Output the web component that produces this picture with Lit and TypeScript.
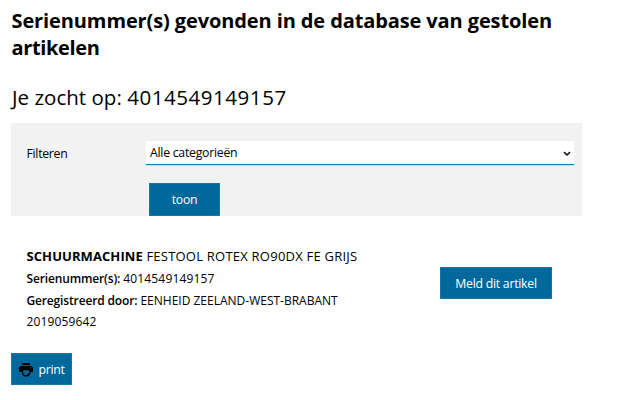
import { LitElement, html, css } from "lit";
import { customElement } from "lit/decorators.js";

@customElement("app-root")
export class AppRoot extends LitElement {
  static styles = css`
    :host {
      display: block;
      box-sizing: border-box;
      height: 400px;
      padding: 7px 49px 0 11px;
      background: #fff;
      color: #000;
      font-family: "Open Sans", "Noto Sans", sans-serif;
      font-size: 12px;
      overflow: hidden;
    }
    h1, h2, p { margin: 0; }
    h1 {
      padding-left: 0.5px;
      font-size: 20px;
      line-height: 27px;
      font-weight: 660;
      letter-spacing: -0.11px;
    }
    h1 .tail { letter-spacing: -0.35px; }
    h2 {
      margin-top: 22px;
      padding-left: 1px;
      font-size: 20.5px;
      line-height: 28px;
      font-weight: 400;
      letter-spacing: 0.02px;
    }
    h2 span { letter-spacing: 0.55px; }
    .filter {
      display: grid;
      grid-template-columns: 120px 428px;
      grid-template-rows: 24px 33px;
      row-gap: 18px;
      box-sizing: border-box;
      height: 93px;
      margin-top: 12px;
      padding: 18px 8px 0 15px;
      background: #f2f2f2;
    }
    label {
      padding-left: 0.5px;
      font-size: 12.3px;
      line-height: 25px;
      letter-spacing: -0.3px;
    }
    .select {
      display: flex;
      align-items: center;
      justify-content: space-between;
      box-sizing: border-box;
      height: 24px;
      padding: 0 3px 0 4px;
      border: 0;
      border-bottom: 1px solid #1f7dac;
      background: #fff;
      font-size: 12.3px;
      letter-spacing: -0.27px;
      box-shadow: 0 1px #c5dce8;
    }
    .chevron { width: 8px; height: 6px; margin-top: 2px; }
    button {
      display: flex;
      align-items: center;
      justify-content: center;
      box-sizing: border-box;
      height: 32px;
      padding: 0;
      border: 1px solid #1a75a5;
      background: #00689a;
      color: #fff;
      font: 400 12.3px "Open Sans", "Noto Sans", sans-serif;
      letter-spacing: -0.27px;
    }
    .show { grid-column: 2; width: 71px; height: 33px; margin-left: 3px; }
    .result {
      display: flex;
      justify-content: space-between;
      margin-top: 29px;
      padding: 0 30px 0 15.5px;
    }
    .result p { line-height: 21.7px; white-space: nowrap; }
    .result b { font-weight: 650; letter-spacing: -0.15px; }
    .result .title { font-size: 13px; line-height: 23px; letter-spacing: 0.23px; }
    .result .title b { font-weight: 700; letter-spacing: 0.08px; }
    .number { letter-spacing: 0.15px; }
    .report { width: 112px; margin-top: 22px; }
    .print { width: 61px; margin-top: 20px; gap: 5px; padding-left: 1px; }
    .printer { width: 14px; height: 14px; margin-top: 1px; }
  `;

  render() {
    return html`
      <h1>Serienummer(s) gevonden in de database van gestolen<br /><span class="tail">artikelen</span></h1>
      <h2>Je zocht op: <span>4014549149157</span></h2>
      <section class="filter">
        <label>Filteren</label>
        <div class="select" role="combobox" tabindex="0">
          <span>Alle categorieën</span>
          <svg class="chevron" viewBox="0 0 8 6" fill="none" stroke="#111" stroke-width="1.6">
            <path d="M1 1.2 4 4 7 1.2" />
          </svg>
        </div>
        <button class="show">toon</button>
      </section>
      <section class="result">
        <div>
          <p class="title"><b>SCHUURMACHINE</b> FESTOOL ROTEX RO90DX FE GRIJS</p>
          <p><b>Serienummer(s):</b> <span class="number">4014549149157</span></p>
          <p><b>Geregistreerd door:</b> EENHEID ZEELAND-WEST-BRABANT</p>
          <p class="number">2019059642</p>
        </div>
        <button class="report">Meld dit artikel</button>
      </section>
      <button class="print">
        <svg class="printer" viewBox="0 0 14 14">
          <path
            fill="#000"
            fill-rule="evenodd"
            d="M3 0h8v2H3zM1.5 3h11L14 4.5V9h-2.5v2L9 13.5H5L3 11V9H0V4.5zM4.2 7.2h6v3.2H8.6V12H5.6L4.2 10.5z"
          />
          <path fill="#00689a" d="M11 4.3h1.3v1H11z" />
        </svg>
        <span>print</span>
      </button>
    `;
  }
}
